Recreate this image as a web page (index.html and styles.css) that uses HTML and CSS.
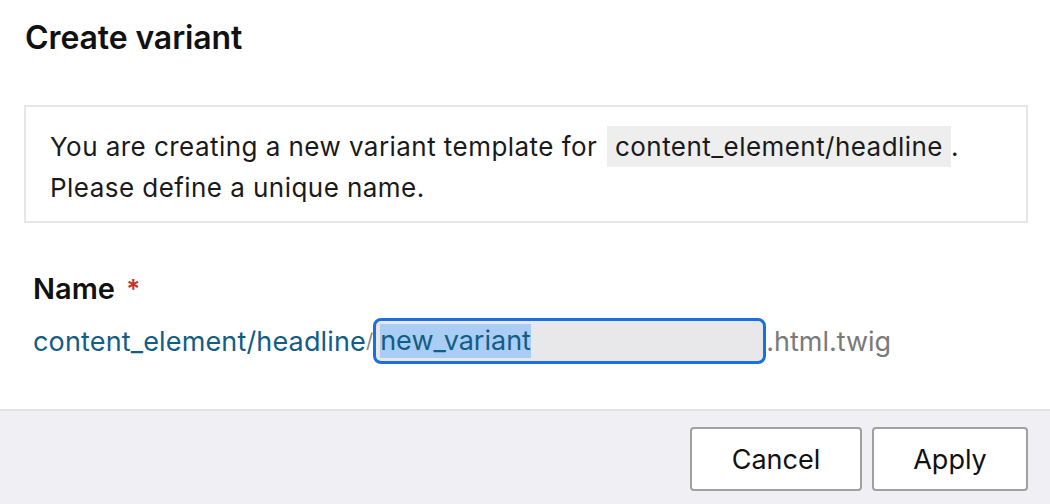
FILE: index.html
```html
<!DOCTYPE html>
<html>
<head>
<meta charset="utf-8">
<link rel="stylesheet" href="styles.css">
</head>
<body>
<div class="dialog">
  <div class="header">
    <h1 class="title">Create variant</h1>
  </div>
  <div class="content">
    <div class="info">
      <p class="info-text">You are creating a new variant template for <code class="chip">content_element/headline</code>.<br>Please define a unique name.</p>
    </div>
    <div class="field">
      <label class="label">Name <span class="req">*</span></label>
      <div class="path">
        <span class="prefix">content_element/headline</span><span class="slash">/</span><span class="input"><span class="sel">new_variant</span></span><span class="suffix">.html.twig</span>
      </div>
    </div>
  </div>
  <div class="footer">
    <button class="btn btn-cancel">Cancel</button>
    <button class="btn btn-apply">Apply</button>
  </div>
</div>
</body>
</html>
```

FILE: styles.css
```css
* { box-sizing: border-box; }
html, body { margin: 0; padding: 0; background: #fff; }
body { font-family: Inter, "Liberation Sans", sans-serif; color: #111; }
.dialog { width: 1050px; height: 504px; display: flex; flex-direction: column; }
.header { padding: 18px 25px 0 25px; height: 105px; }
.title { margin: 0; font-size: 32px; font-weight: 600; line-height: 40px; letter-spacing: -0.1px; }
.content { padding: 0 22px 0 24px; flex: 1; }
.info { border: 2px solid #e6e6e6; height: 118px; padding: 19px 0 0 24px; }
.info-text { margin: 0; font-size: 26px; line-height: 41px; color: #1a1a1a; letter-spacing: 0.45px; }
.chip { font-family: inherit; background: #eeeeee; padding: 5px 8px; margin-left: 2px; }
.field { padding: 47px 0 0 9px; }
.label { display: block; font-size: 29px; font-weight: 600; line-height: 38px; }
.req { color: #c8302c; font-size: 26px; vertical-align: top; margin-left: 4px; }
.path { display: flex; align-items: center; margin-top: 10px; font-size: 27px; }
.prefix { color: #125d85; letter-spacing: 0.15px; }
.slash { color: #888; font-size: 20px; }
.input { width: 393px; height: 46px; border: 3px solid #1b6fe0; border-radius: 8px; background: #e8e8ea; padding: 0 0 0 4px; display: flex; align-items: center; }
.sel { background: #a9cdf4; color: #125d85; line-height: 34px; }
.suffix { color: #7a7a7a; }
.footer { height: 95px; border-top: 2px solid #e2e2e6; background: #f0f0f4; display: flex; justify-content: flex-end; align-items: flex-start; gap: 10px; padding: 16px 22px 0 0; }
.btn { font-family: inherit; font-size: 27px; color: #111; background: #fff; border: 2px solid #a0a0a0; border-radius: 4px; height: 64px; padding: 0; }
.btn-cancel { width: 172px; }
.btn-apply { width: 156px; }
```
